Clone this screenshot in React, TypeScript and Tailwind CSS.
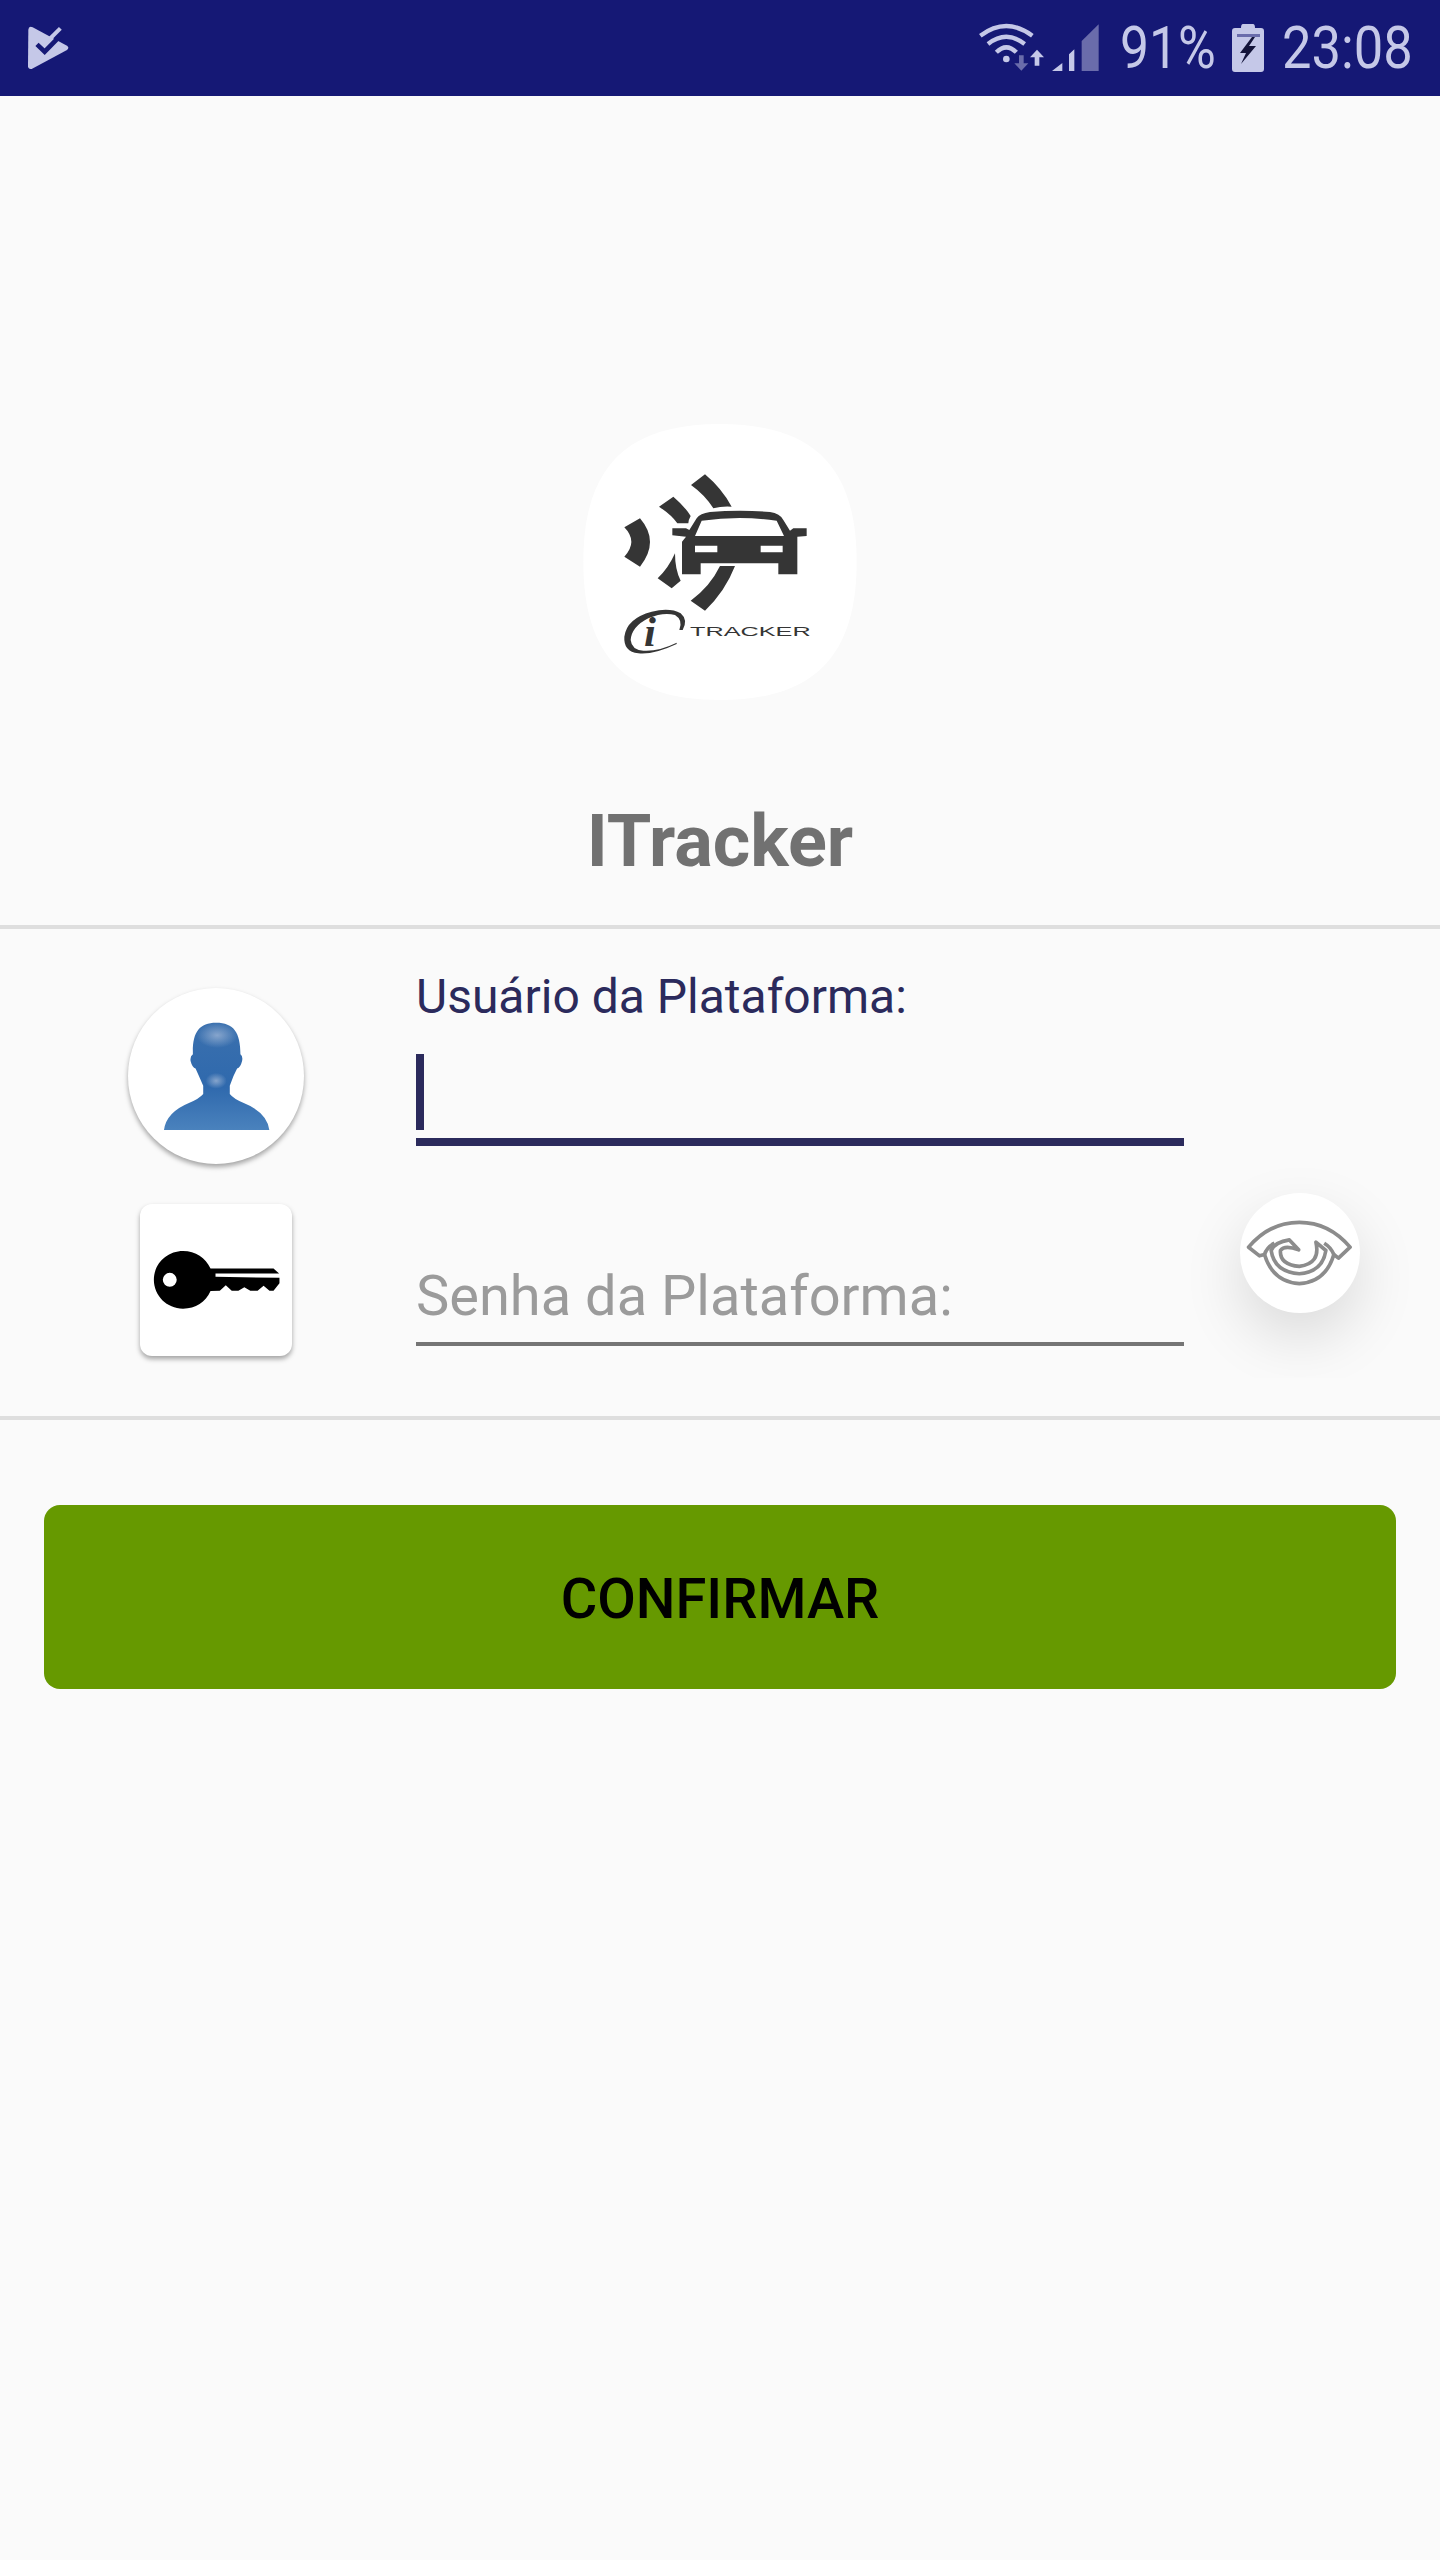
const ROBOTO = "font-['Roboto',sans-serif]";

function StatusLogo() {
  return (
    <svg width="42" height="44" viewBox="78 75 126 132">
      <path d="M82 86 Q83 74 95 79 L198 134 Q206 140 198 147 L92 204 Q82 206 81 196 Z" fill="#c5c8e8" />
      <path d="M108 130 L131 152 L190 92" fill="none" stroke="#151875" strokeWidth="14" />
      <path d="M134 126 L178 82" fill="none" stroke="#c5c8e8" strokeWidth="12" />
    </svg>
  );
}

function WifiSignal() {
  return (
    <svg width="122" height="50" viewBox="55 68 366 150">
      <g fill="none" stroke="#c5c8e8" strokeWidth="13">
        <path d="M62 106 Q140 48 218 106" />
        <path d="M85 131 Q140 88 195 131" />
        <path d="M110 156 Q140 126 170 156" />
      </g>
      <circle cx="140" cy="176" r="10" fill="#c5c8e8" />
      <path d="M178 165 h14 v24 h14 l-21 22 l-21 -22 h14 Z" fill="#6a6cab" />
      <path d="M232 148 l21 23 h-14 v25 h-14 v-25 h-14 Z" fill="#c5c8e8" />
      <path d="M277 212 L308 188 V212 Z M328 212 V162 L344 147 V212 Z" fill="#c5c8e8" />
      <path d="M366 212 V122 L417 72 V212 Z" fill="#6a6cab" />
    </svg>
  );
}

function Battery() {
  return (
    <svg width="32" height="48" viewBox="0 0 32 48">
      <path d="M11 0 h10 q2 0 2 4 h6 q3 0 3 3 v38 q0 3 -3 3 h-26 q-3 0 -3 -3 v-38 q0 -3 3 -3 h6 q0 -4 2 -4 Z" fill="#c5c8e8" />
      <rect x="5" y="10" width="23" height="3" fill="#6a6cab" />
      <path d="M20 13 L8 29 H14 L9 40 L24 22 H17 L23 13 Z" fill="#14143a" />
    </svg>
  );
}

function Logo() {
  return (
    <svg width="320" height="300" viewBox="0 0 960 900">
      <path d="M480 42 C760 42 890 170 890 456 C890 740 760 870 480 870 C200 870 70 740 70 456 C70 170 200 42 480 42 Z" fill="#ffffff" />
      <g fill="#353535">
        <path d="M393 225 L435 193 Q485 235 515 290 Q485 288 460 295 Q435 255 393 225 Z" />
        <path d="M297 290 L340 260 Q375 290 392 318 Q385 330 385 340 L352 340 Q335 315 297 290 Z" />
        <path d="M193 352 L240 325 Q300 395 240 470 L193 440 Q235 395 193 352 Z" />
        <path d="M345 430 Q345 480 362 512 L335 535 L293 505 Q325 475 345 430 Z" />
        <path d="M392 572 Q450 530 480 468 L525 468 Q495 545 435 602 Z" />
        <path fillRule="evenodd" d="M388 360 L410 325 Q420 310 450 306 Q540 298 630 306 Q660 310 670 330 L690 362 L700 355 L740 355 V378 L712 380 L712 493 H655 V460 H422 V493 H366 L366 395 L378 380 L337 376 V355 L378 355 Z M405 378 H672 L650 332 Q540 316 425 332 Z M405 407 V427 H472 V407 Z M602 407 V427 H668 V407 Z" />
        <path d="M350 702 Q280 735 235 730 Q190 725 193 680 Q200 625 275 605 Q330 592 362 610 Q385 630 368 660 L358 660 Q370 630 345 615 Q310 605 265 625 Q215 650 212 690 Q215 720 250 722 Q295 725 350 698 Z" />
      </g>
      <text x="252" y="708" fontFamily="Liberation Serif, serif" fontStyle="italic" fontWeight="700" fontSize="128" fill="#353535">i</text>
      <text x="390" y="679" fontFamily="Liberation Sans, sans-serif" fontSize="38" textLength="362" lengthAdjust="spacingAndGlyphs" fill="#353535">TRACKER</text>
    </svg>
  );
}

function PersonIcon() {
  return (
    <svg width="107" height="109" viewBox="188 188 320 328">
      <defs>
        <linearGradient id="personFill" x1="0" y1="0" x2="0" y2="1">
          <stop offset="0" stopColor="#3a70ae" />
          <stop offset="0.6" stopColor="#2f69ad" />
          <stop offset="1" stopColor="#4a82bd" />
        </linearGradient>
        <radialGradient id="personGlow" cx="0.5" cy="0.5" r="0.5">
          <stop offset="0" stopColor="#8fabd0" stopOpacity="0.9" />
          <stop offset="1" stopColor="#8fabd0" stopOpacity="0" />
        </radialGradient>
      </defs>
      <path d="M347 190 C400 190 420 220 420 285 Q428 290 425 305 Q420 325 410 328 Q398 350 388 380 L388 405 Q400 420 430 432 Q500 460 507 513 L190 513 Q197 460 265 432 Q295 420 308 405 L308 380 Q295 350 285 328 Q275 325 270 305 Q268 290 277 285 C275 220 295 190 347 190 Z" fill="url(#personFill)" />
      <ellipse cx="350" cy="228" rx="62" ry="38" fill="url(#personGlow)" />
      <ellipse cx="347" cy="365" rx="32" ry="24" fill="url(#personGlow)" />
    </svg>
  );
}

function KeyIcon() {
  return (
    <svg width="127" height="58" viewBox="158 875 380 175">
      <path fillRule="evenodd" d="M247 875 C285 875 315 895 330 928 L520 928 L537 943 L345 943 L345 953 L538 956 L538 972 L520 995 L508 995 L490 980 L472 995 L450 995 L432 984 L414 995 L394 995 L376 978 L358 995 L330 996 C315 1030 285 1049 247 1049 C198 1049 159 1010 159 962 C159 914 198 875 247 875 Z M207 941 A21 21 0 1 0 207 983 A21 21 0 1 0 207 941 Z" fill="#000000" />
    </svg>
  );
}

function EyeIcon() {
  return (
    <svg width="108" height="68" viewBox="200 185 324 205">
      <g fill="none" stroke="#8c8c8c" strokeWidth="11" strokeLinejoin="round">
        <path d="M207 270 Q270 195 360 195 Q450 195 513 270 L478 303 L464 292 Q440 375 360 380 Q280 375 255 292 L240 296 Z" />
        <path d="M255 292 Q262 270 285 258 M464 292 Q455 270 435 258" />
        <path d="M358 278 L330 248 Q285 255 275 280 Q285 345 360 350 Q430 345 440 280 L410 255 Q425 320 360 328 Q300 322 303 280 Q315 262 358 278 Z" />
      </g>
    </svg>
  );
}

export default function App() {
  return (
    <div className={`relative min-h-[2560px] bg-[#fafafa] ${ROBOTO}`}>
      <header className="flex h-[96px] items-center justify-between bg-[#151875] pl-[27px] pr-[29px] text-[60px] leading-none text-[#c5c8e8]">
        <StatusLogo />
        <div className="flex items-center">
          <WifiSignal />
          <span className="ml-[20px] w-[94px] origin-left scale-x-[0.86] whitespace-nowrap">91%</span>
          <span className="ml-[18px] flex">
            <Battery />
          </span>
          <span className="ml-[18px] w-[129px] origin-left scale-x-[0.875] whitespace-nowrap">23:08</span>
        </div>
      </header>

      <div className="mt-[314px] flex justify-center">
        <Logo />
      </div>

      <h1 className="mt-[92px] text-center text-[72px] font-bold leading-[80px] text-[#717171]">ITracker</h1>

      <section className="mt-[43px] flex h-[495px] border-y-[4px] border-[#dedede]">
        <div className="flex w-[416px] flex-col items-center pl-[16px] pt-[59px]">
          <div className="flex h-[176px] w-[176px] items-center justify-center rounded-full bg-white shadow-[0_3px_5px_rgba(0,0,0,0.35)]">
            <PersonIcon />
          </div>
          <div className="mt-[40px] flex h-[152px] w-[152px] items-center justify-center rounded-[12px] bg-white shadow-[0_3px_5px_rgba(0,0,0,0.35)]">
            <KeyIcon />
          </div>
        </div>
        <div className="w-[768px] pt-[38px]">
          <label className="block text-[48px] leading-[60px] text-[#2b2a5c]">Usuário da Plataforma:</label>
          <div className="mt-[27px] h-[92px] border-b-[8px] border-[#2b2a5c]">
            <div className="h-[76px] w-[8px] bg-[#2b2a5c]" />
          </div>
          <div className="mt-[117px] flex h-[83px] items-center border-b-[4px] border-[#757575] pb-[14px] text-[56px] leading-none text-[#9b9b9b]">
            Senha da Plataforma:
          </div>
        </div>
      </section>

      <div className="absolute left-[1170px] top-[1130px] h-[248px] w-[270px] overflow-hidden">
        <div className="ml-[70px] mt-[63px] flex h-[120px] w-[120px] items-center justify-center rounded-full bg-white shadow-[0_24px_60px_rgba(0,0,0,0.13)]">
          <EyeIcon />
        </div>
      </div>

      <button className="mx-[44px] mt-[85px] flex h-[184px] w-[1352px] items-center justify-center rounded-[16px] bg-[#669900] pt-[4px] text-[56px] font-medium text-black">
        CONFIRMAR
      </button>
    </div>
  );
}
